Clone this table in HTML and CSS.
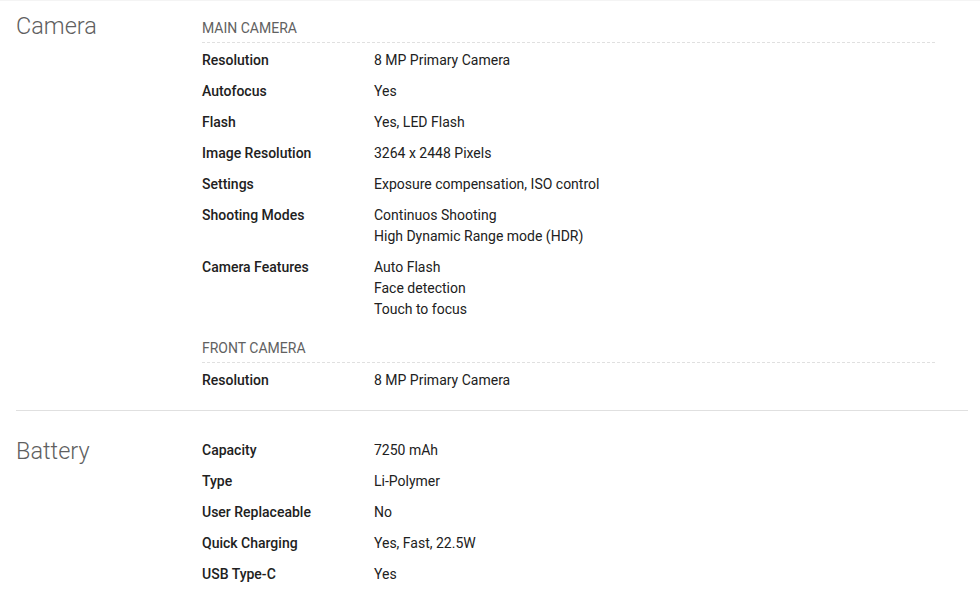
FILE: index.html
```html
<!DOCTYPE html>
<html lang="en">
<head>
<meta charset="utf-8">
<title>Specifications</title>
<link rel="stylesheet" href="styles.css">
</head>
<body>
<div class="specs">
  <section class="spec-section spec-section--first">
    <h2 class="spec-title">Camera</h2>
    <div class="spec-body">
      <div class="spec-group">
        <div class="group-head">Main Camera</div>
        <div class="spec-row"><div class="spec-label">Resolution</div><div class="spec-value">8 MP Primary Camera</div></div>
        <div class="spec-row"><div class="spec-label">Autofocus</div><div class="spec-value">Yes</div></div>
        <div class="spec-row"><div class="spec-label">Flash</div><div class="spec-value">Yes, LED Flash</div></div>
        <div class="spec-row"><div class="spec-label">Image Resolution</div><div class="spec-value">3264 x 2448 Pixels</div></div>
        <div class="spec-row"><div class="spec-label">Settings</div><div class="spec-value">Exposure compensation, ISO control</div></div>
        <div class="spec-row"><div class="spec-label">Shooting Modes</div><div class="spec-value">Continuos Shooting<br>High Dynamic Range mode (HDR)</div></div>
        <div class="spec-row"><div class="spec-label">Camera Features</div><div class="spec-value">Auto Flash<br>Face detection<br>Touch to focus</div></div>
      </div>
      <div class="spec-group">
        <div class="group-head">Front Camera</div>
        <div class="spec-row"><div class="spec-label">Resolution</div><div class="spec-value">8 MP Primary Camera</div></div>
      </div>
    </div>
  </section>
  <section class="spec-section spec-section--last">
    <h2 class="spec-title">Battery</h2>
    <div class="spec-body">
      <div class="spec-group spec-group--plain">
        <div class="spec-row"><div class="spec-label">Capacity</div><div class="spec-value">7250 mAh</div></div>
        <div class="spec-row"><div class="spec-label">Type</div><div class="spec-value">Li-Polymer</div></div>
        <div class="spec-row"><div class="spec-label">User Replaceable</div><div class="spec-value">No</div></div>
        <div class="spec-row"><div class="spec-label">Quick Charging</div><div class="spec-value">Yes, Fast, 22.5W</div></div>
        <div class="spec-row"><div class="spec-label">USB Type-C</div><div class="spec-value">Yes</div></div>
      </div>
    </div>
  </section>
</div>
</body>
</html>
```
FILE: styles.css
```css
html, body {
  margin: 0;
  padding: 0;
  background: #ffffff;
}
body {
  font-family: Roboto, "Liberation Sans", Arial, sans-serif;
  color: #212121;
  font-size: 14px;
  overflow: hidden;
}
.specs {
  border-top: 1px solid #f4f4f4;
}
.spec-section {
  display: flex;
  margin: 0 12px 0 16px;
  border-bottom: 1px solid #e0e0e0;
}
.spec-section--first {
  padding: 9px 0 14px;
}
.spec-section--last {
  border-bottom: none;
  padding: 24px 0 10px;
}
.spec-title {
  width: 186px;
  flex: none;
  margin: 0;
  font-size: 23.5px;
  font-weight: 300;
  line-height: 32px;
  color: #5f5f5f;
}
.spec-body {
  flex: 1;
  padding-right: 33px;
}
.spec-group + .spec-group {
  margin-top: 5px;
}
.group-head {
  padding: 8px 0 4px;
  line-height: 20px;
  text-transform: uppercase;
  color: #616161;
  border-bottom: 1px dashed #e0e0e0;
  margin-bottom: 2px;
}
.spec-row {
  display: flex;
  padding: 5px 0;
  line-height: 21px;
}
.spec-label {
  width: 172px;
  flex: none;
  font-weight: 500;
  color: #212121;
}
.spec-value {
  flex: 1;
  color: #212121;
}
```
